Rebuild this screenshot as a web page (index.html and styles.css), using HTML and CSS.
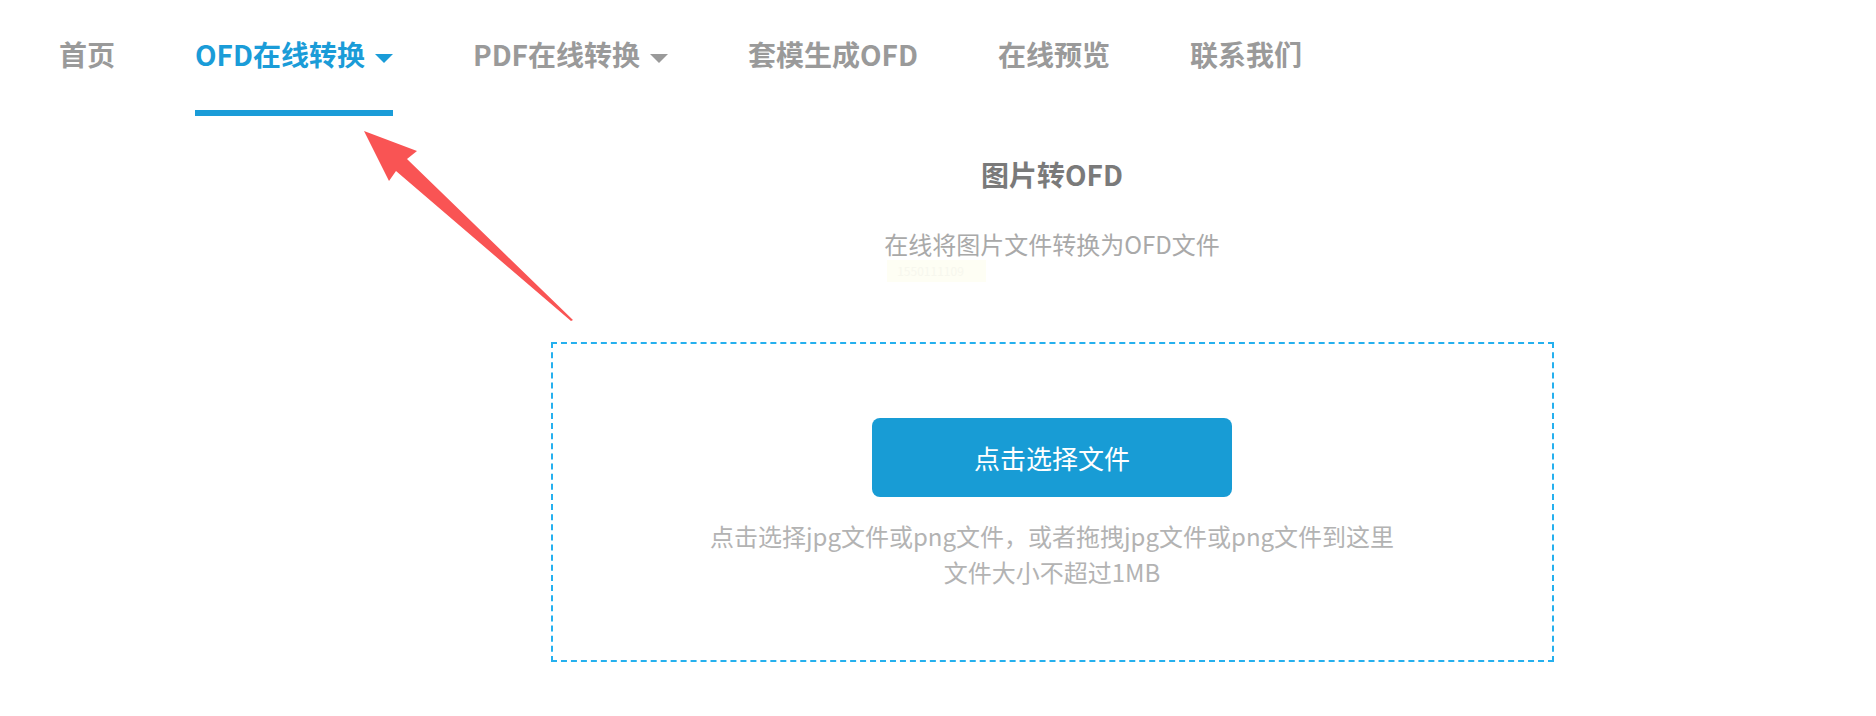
FILE: index.html
```html
<!DOCTYPE html>
<html lang="zh-CN">
<head>
<meta charset="utf-8">
<title>图片转OFD</title>
<link rel="stylesheet" href="styles.css">
</head>
<body>
<header class="topbar">
  <nav class="nav">
    <a class="nav-item">首页</a>
    <a class="nav-item active">OFD在线转换<span class="caret"></span></a>
    <a class="nav-item">PDF在线转换<span class="caret"></span></a>
    <a class="nav-item">套模生成OFD</a>
    <a class="nav-item">在线预览</a>
    <a class="nav-item">联系我们</a>
  </nav>
</header>
<main class="main">
  <h1 class="title">图片转OFD</h1>
  <div class="subtitle-wrap">
    <p class="subtitle">在线将图片文件转换为OFD文件<span class="tip">1550111109</span></p>
  </div>
  <section class="dropzone">
    <button class="pick-btn">点击选择文件</button>
    <p class="hint">点击选择jpg文件或png文件，或者拖拽jpg文件或png文件到这里<br>文件大小不超过1MB</p>
  </section>
</main>
<svg class="annot-arrow" width="1876" height="716" viewBox="0 0 1876 716">
  <polygon points="364,131 417,151 407,159 573,320 571,321 396,171 389,181" fill="#f95454"/>
</svg>
</body>
</html>
```
FILE: styles.css
```css
html, body {
  margin: 0;
  padding: 0;
  background: #ffffff;
}
body {
  font-family: "Noto Sans CJK SC", "Noto Sans", sans-serif;
  width: 1876px;
  height: 716px;
  overflow: hidden;
  position: relative;
}
.topbar {
  height: 116px;
}
.nav {
  display: flex;
  gap: 80px;
  padding-left: 59px;
}
.nav-item {
  display: flex;
  align-items: center;
  height: 107px;
  padding-bottom: 3px;
  border-bottom: 6px solid transparent;
  font-size: 28px;
  font-weight: 700;
  color: #9a9a9a;
  text-decoration: none;
  cursor: pointer;
}
.nav-item.active {
  color: #1a9cd8;
  border-bottom-color: #1a9cd8;
}
.caret {
  display: inline-block;
  width: 0;
  height: 0;
  margin-left: 10px;
  margin-top: 10px;
  border-top: 9px solid currentColor;
  border-left: 9px solid transparent;
  border-right: 9px solid transparent;
}
.main {
  margin-left: 228px;
  display: flex;
  flex-direction: column;
  align-items: center;
}
.title {
  margin: 36px 0 0;
  font-size: 28px;
  line-height: 45px;
  font-weight: 700;
  color: #7a7a7a;
}
.subtitle-wrap {
  margin-top: 29px;
}
.subtitle {
  position: relative;
  margin: 0;
  font-size: 24px;
  line-height: 36px;
  color: #a9a9a9;
}
.tip {
  position: absolute;
  left: 3px;
  top: 34px;
  width: 99px;
  height: 22px;
  padding-left: 10px;
  box-sizing: border-box;
  background: #fefef4;
  font-size: 12px;
  line-height: 22px;
  color: #f7f7ee;
}
.dropzone {
  margin-top: 80px;
  width: 1003px;
  height: 320px;
  box-sizing: border-box;
  border: 2px dashed #25b0ee;
  padding-top: 74px;
  display: flex;
  flex-direction: column;
  align-items: center;
}
.pick-btn {
  width: 360px;
  height: 79px;
  border: none;
  border-radius: 8px;
  background: #189cd5;
  color: #ffffff;
  font-family: inherit;
  font-size: 26px;
  cursor: pointer;
}
.hint {
  margin: 21px 0 0;
  font-size: 24px;
  line-height: 36px;
  color: #b3b3b3;
  text-align: center;
}
.annot-arrow {
  position: absolute;
  left: 0;
  top: 0;
  pointer-events: none;
}
```
